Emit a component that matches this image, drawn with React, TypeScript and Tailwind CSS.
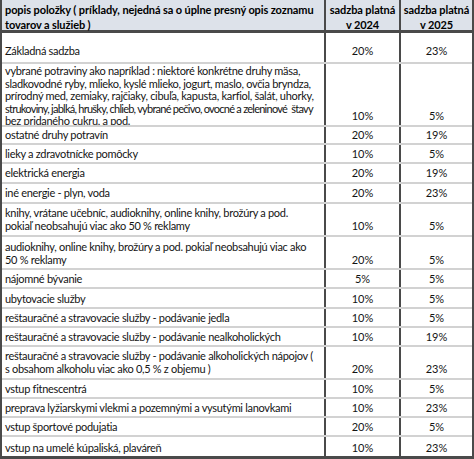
type Row = {
  lines: string[];
  a: string;
  b: string;
  h: string;
  top?: boolean;
};

const rows: Row[] = [
  { lines: ['Základná sadzba'], a: '20%', b: '23%', h: 'h-[31px] pb-[5px]' },
  {
    lines: [
      'vybrané potraviny ako napríklad : niektoré konkrétne druhy mäsa,',
      'sladkovodné ryby, mlieko, kyslé mlieko, jogurt, maslo, ovčia bryndza,',
      'prírodný med, zemiaky, rajčiaky, cibuľa, kapusta, karfiol, šalát, uhorky,',
      'strukoviny, jablká, hrušky, chlieb, vybrané pečivo, ovocné a zeleninové  štavy',
      'bez pridaného cukru, a pod.',
    ],
    a: '10%',
    b: '5%',
    h: 'h-[63px] pb-[3px]',
    top: true,
  },
  { lines: ['ostatné druhy potravín'], a: '20%', b: '19%', h: 'h-[18px] pb-[2px]' },
  { lines: ['lieky a zdravotnícke pomôcky'], a: '10%', b: '5%', h: 'h-[19px] pb-[2px]' },
  { lines: ['elektrická energia'], a: '20%', b: '19%', h: 'h-[20px] pb-[3px]' },
  { lines: ['iné energie - plyn, voda'], a: '20%', b: '23%', h: 'h-[20px] pb-[3px]' },
  {
    lines: ['knihy, vrátane učebníc, audioknihy, online knihy, brožúry a pod.', 'pokiaľ neobsahujú viac ako 50 % reklamy'],
    a: '10%',
    b: '5%',
    h: 'h-[33px] pb-[3px]',
  },
  {
    lines: ['audioknihy, online knihy, brožúry a pod. pokiaľ neobsahujú viac ako', '50 % reklamy'],
    a: '20%',
    b: '5%',
    h: 'h-[33px] pb-[2px]',
  },
  { lines: ['nájomné bývanie'], a: '5%', b: '5%', h: 'h-[19px] pb-[2px]' },
  { lines: ['ubytovacie služby'], a: '10%', b: '5%', h: 'h-[20px] pb-[2px]' },
  { lines: ['reštauračné a stravovacie služby - podávanie jedla'], a: '10%', b: '5%', h: 'h-[19px] pb-[2px]' },
  {
    lines: ['reštauračné a stravovacie služby - podávanie nealkoholických', 'nápojov'],
    a: '10%',
    b: '19%',
    h: 'h-[19px] pt-[2px]',
    top: true,
  },
  {
    lines: ['reštauračné a stravovacie služby - podávanie alkoholických nápojov (', 's obsahom alkoholu viac ako 0,5 % z objemu )'],
    a: '20%',
    b: '23%',
    h: 'h-[33px] pb-[3px]',
  },
  { lines: ['vstup fitnescentrá'], a: '10%', b: '5%', h: 'h-[19px] pb-[2px]' },
  { lines: ['preprava lyžiarskymi vlekmi a pozemnými a vysutými lanovkami'], a: '10%', b: '23%', h: 'h-[19px] pb-[2px]' },
  { lines: ['vstup športové podujatia'], a: '20%', b: '5%', h: 'h-[19px] pb-[2px]' },
  { lines: ['vstup na umelé kúpaliská, plaváreň'], a: '10%', b: '23%', h: 'h-[19px] pb-[2px]' },
];

export default function App() {
  return (
    <div className="w-[474px] h-[459px] bg-white overflow-hidden font-['Lato','Liberation_Sans',sans-serif] text-[11px] leading-[13px] text-[#141414]">
      <div className="border-l-2 border-r-2 border-b-[3px] border-[#4a4a4a]">
        {/* header */}
        <div className="grid grid-cols-[322px_2px_73px_2px_71px] h-[33px] bg-[#dde2ea] border-b-[3px] border-[#4a4a4a] font-bold text-[11px] leading-[15px] tracking-[-0.1px] text-black">
          <div className="pl-[3px] pt-[2px] whitespace-nowrap">
            <div>popis položky ( príklady, nejedná sa o úplne presný opis zoznamu</div>
            <div>tovarov a služieb )</div>
          </div>
          <div className="bg-[#4a4a4a]" />
          <div className="pt-[2px] text-center whitespace-nowrap">
            <div>sadzba platná</div>
            <div>v 2024</div>
          </div>
          <div className="bg-[#4a4a4a]" />
          <div className="pt-[2px] text-center whitespace-nowrap">
            <div>sadzba platná</div>
            <div>v 2025</div>
          </div>
        </div>

        {rows.map((r, i) => {
          const [height, pad] = r.h.split(' ');
          const tall = r.lines.length > 2;
          return (
            <div
              key={i}
              className={`grid grid-cols-[322px_2px_73px_2px_71px] box-border ${
                i < rows.length - 1 ? 'border-b-2 border-[#d2d2d2]' : ''
              } ${height}`}
            >
              <div
                className={`pl-[3px] overflow-hidden whitespace-nowrap flex flex-col tracking-[-0.3px] ${
                  r.top ? 'justify-start' : 'justify-end'
                } ${r.top ? (tall ? 'pt-[1px] leading-[12.5px]' : 'pt-[2px]') : pad}`}
              >
                {r.lines.map((l, j) => (
                  <div key={j} className={`whitespace-pre ${l.length > 74 ? 'tracking-[-0.75px]' : ''}`}>
                    {l}
                  </div>
                ))}
              </div>
              <div className="bg-[#4a4a4a]" />
              <div className={`flex items-end justify-center ${r.top && !tall ? 'pb-[2px]' : pad}`}>{r.a}</div>
              <div className="bg-[#4a4a4a]" />
              <div className={`flex items-end justify-center ${r.top && !tall ? 'pb-[2px]' : pad}`}>{r.b}</div>
            </div>
          );
        })}
      </div>
    </div>
  );
}
